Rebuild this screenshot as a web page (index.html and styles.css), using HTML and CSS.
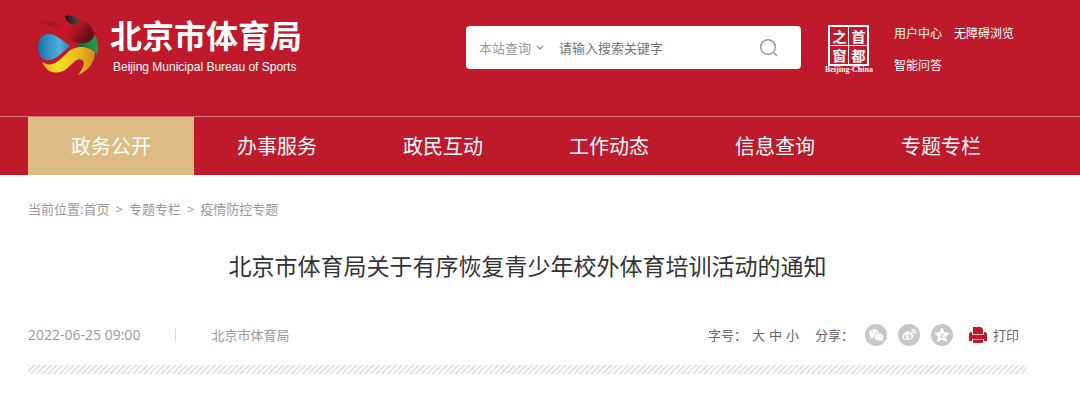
FILE: index.html
```html
<!DOCTYPE html>
<html lang="zh-CN">
<head>
<meta charset="utf-8">
<meta name="viewport" content="width=device-width, initial-scale=1">
<title>北京市体育局</title>
<link rel="stylesheet" href="styles.css">
</head>
<body>
<header class="site-header">
  <div class="masthead container">
    <a class="brand" href="#">
      <svg class="brand-mark" viewBox="0 0 64 62" aria-hidden="true">
        <defs>
          <linearGradient id="blue" x1="0" x2="1"><stop offset="0" stop-color="#176fa8"/><stop offset=".65" stop-color="#4fafe0"/><stop offset="1" stop-color="#2f86bd"/></linearGradient>
          <linearGradient id="red" x1="0" x2="1" y1="0" y2=".3"><stop offset="0" stop-color="#be1a2c"/><stop offset=".3" stop-color="#a01522"/><stop offset=".55" stop-color="#d3142b"/><stop offset=".75" stop-color="#b01425"/><stop offset="1" stop-color="#6b1019"/></linearGradient>
          <linearGradient id="yellow" x1="0" x2="1"><stop offset="0" stop-color="#e0a821"/><stop offset=".3" stop-color="#f6e21f"/><stop offset=".75" stop-color="#e8b021"/><stop offset="1" stop-color="#c98a1c"/></linearGradient>
          <linearGradient id="green" x1="0" x2="1"><stop offset="0" stop-color="#0b6b36"/><stop offset="1" stop-color="#1fa04e"/></linearGradient>
          <linearGradient id="black" x1="0" x2="1"><stop offset="0" stop-color="#151515"/><stop offset="1" stop-color="#5c4a3c"/></linearGradient>
        </defs>
        <path d="M40 31 Q52 29 59 21 Q64 30 61 41 Q56 34 49 33 Q43 34 41 32Z" fill="url(#green)"/>
        <path d="M0 8 Q8 5 16 8 Q24 11 34 10 Q41 12 44 9 L43 5 C52 7 58 14 58 21 C57 28 50 30 42 29 C32 26 30 20 20 15 Q10 10 0 8Z" fill="url(#red)"/>
        <path d="M29 2 C34 0 43 3 44 9 C38 13 30 9 29 2Z" fill="url(#black)"/>
        <path d="M8 21 C18 17 25 26 34 32 C25 39 19 48 9 46 C0 42 0 25 8 21Z" fill="url(#blue)"/>
        <path d="M6 48 C15 54 22 48 30 40 C39 30 54 32 59 39 Q58 54 42 61 Q51 49 46 46 C41 43 36 51 29 56 C18 62 10 57 6 48Z" fill="url(#yellow)"/>
      </svg>
      <span class="brand-names">
        <span class="brand-name">北京市体育局</span>
        <span class="brand-english">Beijing Municipal Bureau of Sports</span>
      </span>
    </a>
    <form class="search" role="search">
      <span class="scope">
        <select class="scope-select" aria-label="查询范围"><option>本站查询</option></select>
        <svg class="scope-arrow" viewBox="0 0 8 6" aria-hidden="true"><path d="M1 1l3 3 3-3"/></svg>
      </span>
      <input class="search-input" type="text" placeholder="请输入搜索关键字" aria-label="搜索关键字">
      <button class="search-button" type="submit" aria-label="搜索">
        <svg viewBox="0 0 20 20" aria-hidden="true"><circle cx="9" cy="9" r="7.3"/><path d="M14 14l4 4"/></svg>
      </button>
    </form>
    <a class="capital" href="#">
      <span class="seal"><span>之</span><span>首</span><span>窗</span><span>都</span></span>
      <span class="capital-english">Beijing-China</span>
    </a>
    <nav class="user-links">
      <a href="#">用户中心</a>
      <a href="#">无障碍浏览</a>
      <a href="#">智能问答</a>
    </nav>
  </div>
  <div class="nav-band">
    <nav class="main-nav container">
      <a class="nav-item is-active" href="#">政务公开</a>
      <a class="nav-item" href="#">办事服务</a>
      <a class="nav-item" href="#">政民互动</a>
      <a class="nav-item" href="#">工作动态</a>
      <a class="nav-item" href="#">信息查询</a>
      <a class="nav-item" href="#">专题专栏</a>
    </nav>
  </div>
</header>
<main class="container">
  <nav class="breadcrumb">
    <span>当前位置:<a href="#">首页</a></span><span>&gt;</span><a href="#">专题专栏</a><span>&gt;</span><a href="#">疫情防控专题</a>
  </nav>
  <h1 class="title">北京市体育局关于有序恢复青少年校外体育培训活动的通知</h1>
  <div class="meta">
    <time class="meta-date">2022-06-25 09:00</time>
    <span class="meta-divider"></span>
    <span class="meta-source">北京市体育局</span>
    <div class="tools">
      <span class="tool-label">字号：</span>
      <span class="sizes">
        <button type="button">大</button>
        <button type="button">中</button>
        <button type="button">小</button>
      </span>
      <span class="tool-label">分享：</span>
      <span class="share">
        <a href="#" aria-label="微信">
          <svg viewBox="0 0 22 22"><circle cx="11" cy="11" r="11" fill="#c7c7c7"/><g fill="#fff"><ellipse cx="9" cy="9.4" rx="5" ry="4.2"/><path d="M5 12l0 3 3-1.6z"/></g><ellipse cx="14" cy="13" rx="4.6" ry="3.9" fill="#fff" stroke="#c7c7c7" stroke-width=".8"/><path d="M15 16l2.5 1.6-.4-3z" fill="#fff"/><g fill="#c7c7c7"><circle cx="7.3" cy="8.3" r=".7"/><circle cx="10.8" cy="8.3" r=".7"/><circle cx="12.6" cy="12.2" r=".6"/><circle cx="15.5" cy="12.2" r=".6"/></g></svg>
        </a>
        <a href="#" aria-label="微博">
          <svg viewBox="0 0 22 22"><circle cx="11" cy="11" r="11" fill="#c7c7c7"/><path d="M9.500 7.200c1.200-.4 2 .2 1.600 1.600 2-.8 3.600-.2 3 1.400 1.600.5 2 1.600 1.300 2.800-1.200 2.200-4 3.200-6.400 3.100C6 16 4 14.600 4.200 12.600 4.500 10.200 7.500 7.700 9.500 7.200Z" fill="#fff"/><ellipse cx="9.600" cy="12.700" rx="3.900" ry="2.500" transform="rotate(-8 9.600 12.700)" fill="#c7c7c7"/><circle cx="9.300" cy="12.900" r="2" fill="#fff"/><circle cx="8.900" cy="13.200" r=".7" fill="#c7c7c7"/><path d="M13.600 5.700c2.700-.5 4.600 1.700 3.900 4.200M13.900 7.700c1.200-.2 2 .7 1.700 1.800" fill="none" stroke="#fff" stroke-width="1.100" stroke-linecap="round"/></svg>
        </a>
        <a href="#" aria-label="QQ空间">
          <svg viewBox="0 0 22 22"><circle cx="11" cy="11" r="11" fill="#c7c7c7"/><path d="M11 4l2.100 4.600 5 .6-3.700 3.400 1 5-4.400-2.500-4.400 2.500 1-5-3.700-3.400 5-.6z" fill="#fff" stroke="#fff" stroke-width=".8" stroke-linejoin="round"/><path d="M8.800 10.200h4.200l-3.800 3q2.400.7 5 0" fill="none" stroke="#c7c7c7" stroke-width=".9"/></svg>
        </a>
      </span>
      <button class="print" type="button">
        <svg viewBox="0 0 18 16" aria-hidden="true"><path fill="#be1a2c" d="M4 0h8l2 2v5H4zM1.500 5H3v3h12V5h1.500L18 6.500V14h-3v-2.500H3V14H0V6.500zM4 12.500h10V15q0 1-1 1H5q-1 0-1-1z"/><path fill="#be1a2c" d="M1 7.700h16v4.300H1z"/></svg>
        打印
      </button>
    </div>
  </div>
  <div class="hatch"></div>
</main>
</body>
</html>
```
FILE: styles.css
```css
* { box-sizing: border-box; }

body {
  margin: 0;
  background: #fff;
  color: #666;
  font: 13px/20px "Open Sans", "Noto Sans CJK SC", sans-serif;
}

a { color: inherit; text-decoration: none; }

button, input, select {
  margin: 0;
  padding: 0;
  border: 0;
  background: none;
  color: inherit;
  font: inherit;
}

svg { display: block; }

.container { padding: 0 53px 0 28px; }

.site-header { background: #be1a2c; color: #fff; }

.masthead {
  display: flex;
  align-items: flex-start;
  height: 116px;
}

.brand { display: flex; gap: 10px; padding: 14px 0 0 8px; }
.brand-mark { width: 64px; height: 62px; }
.brand-names { display: flex; flex-direction: column; padding-top: 2px; }
.brand-name { font-size: 32px; line-height: 40px; font-weight: 700; white-space: nowrap; }
.brand-english {
  padding: 1px 0 0 3px;
  font: 12px/20px "Liberation Sans", sans-serif;
  white-space: nowrap;
}

.search {
  display: flex;
  align-items: center;
  width: 335px;
  height: 43px;
  margin: 26px 24px 0 auto;
  padding: 0 20px 0 13px;
  border-radius: 4px;
  background: #fff;
}
.scope { display: flex; align-items: center; gap: 4px; color: #999; }
.scope-select { appearance: none; width: 53px; }
.scope-arrow { width: 8px; height: 6px; fill: none; stroke: #999; stroke-width: 1.5; }
.search-input { flex: 1; min-width: 0; margin-left: 15px; outline: 0; color: #333; }
.search-input::placeholder { color: #757575; opacity: 1; }
.search-button { width: 22px; height: 22px; }
.search-button svg { width: 20px; height: 20px; fill: none; stroke: #999; stroke-width: 1.5; }

.capital { display: flex; flex-direction: column; align-items: center; margin: 25px 21px 0 0; }
.seal {
  display: grid;
  grid-template-columns: 1fr 1fr;
  gap: 1px;
  width: 41px;
  padding: 2px;
  background: #fff;
  font: 700 14px/18px "Noto Sans CJK SC", sans-serif;
  text-align: center;
}
.seal span { height: 18px; background: #be1a2c; }
.capital-english { font: 700 8px/8px "Liberation Serif", serif; white-space: nowrap; }

.user-links {
  display: flex;
  flex-wrap: wrap;
  gap: 12px;
  width: 133px;
  padding-top: 24px;
  font-size: 12px;
}

.nav-band { border-top: 1px solid #d9737d; }
.main-nav { display: flex; }
.nav-item {
  flex: 1;
  max-width: 166px;
  padding-top: 2px;
  font-size: 20px;
  line-height: 56px;
  text-align: center;
  white-space: nowrap;
}
.nav-item.is-active { background: #dcbc82; }

.breadcrumb { display: flex; gap: 6px; padding-top: 24px; color: #999; }

.title {
  margin: 31px 0 0;
  color: #333;
  font-size: 23px;
  line-height: 32px;
  font-weight: 400;
  text-align: center;
}

.meta { display: flex; align-items: center; margin-top: 42px; color: #999; }
.meta-date { font-size: 14px; }
.meta-divider { width: 1px; height: 14px; margin: 0 35px; background: #ddd; }
.tools { display: flex; align-items: center; margin-left: auto; padding-right: 8px; color: #666; }
.sizes { display: flex; gap: 4px; margin: 0 16px 0 5px; }
.share { display: flex; gap: 11px; margin: 0 16px 0 11px; }
.share svg { width: 22px; height: 22px; }
.print { display: flex; align-items: center; gap: 6px; }
.print svg { width: 18px; height: 16px; }

.hatch {
  height: 9px;
  margin-top: 19px;
  background: repeating-linear-gradient(135deg, #e2e2e2 0 1px, #fff 2px 3px, #e2e2e2 4px);
}
```
